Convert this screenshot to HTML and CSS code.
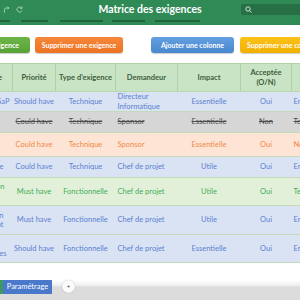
FILE: index.html
```html
<!DOCTYPE html>
<html lang="fr">
<head>
  <meta charset="UTF-8" />
  <title>Matrice des exigences</title>
  <link rel="stylesheet" href="styles.css">
</head>
<body>
  <div class="topbar">
    <div class="quick">
      <svg width="7" height="7" viewBox="0 0 7 7"><path d="M1.5 6.5V3.5Q1.5 2 3 2H6M4.5 0.5L6 2L4.5 3.5" fill="none" stroke="#9fd0b0" stroke-width="1"/></svg>
      <svg width="7" height="7" viewBox="0 0 7 7"><path d="M5.8 2.2A2.6 2.6 0 1 0 6 4.5M6 0.6V2.4H4.2" fill="none" stroke="#9fd0b0" stroke-width="1"/></svg>
    </div>
    <h1 class="title">Matrice des exigences</h1>
    <div class="search">
      <svg width="7" height="7" viewBox="0 0 7 7"><circle cx="3" cy="3" r="2.2" fill="none" stroke="#cfe6d6" stroke-width="1"/><path d="M4.6 4.6L6.5 6.5" stroke="#cfe6d6" stroke-width="1"/></svg>
    </div>
    <div class="rule">
      <span class="dash d1"></span>
      <span class="dash d2"></span>
      <span class="dash d3"></span>
      <span class="dash d4"></span>
      <span class="dash d5"></span>
    </div>
  </div>

  <div class="actions">
    <button class="btn green">Ajouter une exigence</button>
    <button class="btn orange">Supprimer une exigence</button>
    <button class="btn blue">Ajouter une colonne</button>
    <button class="btn yellow">Supprimer une colonne</button>
  </div>

  <div class="sheet">
    <table class="matrix">
      <colgroup>
        <col class="c-name"><col class="c-prio"><col class="c-type"><col class="c-dem"><col class="c-imp"><col class="c-acc"><col class="c-last">
      </colgroup>
      <thead>
        <tr>
          <th class="first end-2">Exigence</th>
          <th>Priorité</th>
          <th>Type d'exigence</th>
          <th>Demandeur</th>
          <th>Impact</th>
          <th>Acceptée<br>(O/N)</th>
          <th>Commentaire</th>
        </tr>
      </thead>
      <tbody>
        <tr class="blue h20">
          <td class="first end-10">Connecteur SaP</td>
          <td>Should have</td>
          <td>Technique</td>
          <td class="left">Directeur<br>Informatique</td>
          <td>Essentielle</td>
          <td>Oui</td>
          <td class="left">Entreprise</td>
        </tr>
        <tr class="gray h21">
          <td class="first"><span class="sub">Archivage</span></td>
          <td>Could have</td>
          <td>Technique</td>
          <td class="left">Sponsor</td>
          <td>Essentielle</td>
          <td>Non</td>
          <td class="left">Technique</td>
        </tr>
        <tr class="peach h24">
          <td class="first"><span class="sub">Export</span></td>
          <td>Could have</td>
          <td>Technique</td>
          <td class="left">Sponsor</td>
          <td>Essentielle</td>
          <td>Oui</td>
          <td class="left">Non</td>
        </tr>
        <tr class="blue h21">
          <td class="first end-3">Sauvegarde</td>
          <td>Could have</td>
          <td>Technique</td>
          <td class="left">Chef de projet</td>
          <td>Utile</td>
          <td>Oui</td>
          <td class="left">Entreprise</td>
        </tr>
        <tr class="green h28">
          <td class="first end-4">Authentification<span class="sub">unique</span></td>
          <td>Must have</td>
          <td>Fonctionnelle</td>
          <td class="left">Chef de projet</td>
          <td>Utile</td>
          <td>Oui</td>
          <td class="left">Technique</td>
        </tr>
        <tr class="blue h29">
          <td class="first end-3">Accès par session<br>Suivi par agent</td>
          <td>Must have</td>
          <td>Fonctionnelle</td>
          <td class="left">Chef de projet</td>
          <td>Utile</td>
          <td>Oui</td>
          <td class="left">Entreprise</td>
        </tr>
        <tr class="blue h28">
          <td class="first end-6"><span class="sub">Tableaux</span>de bord des ventes</td>
          <td>Should have</td>
          <td>Fonctionnelle</td>
          <td class="left">Chef de projet</td>
          <td>Essentielle</td>
          <td>Oui</td>
          <td class="left">Entreprise</td>
        </tr>
      </tbody>
    </table>
  </div>

  <div class="spacer"></div>

  <div class="sheetbar">
    <span class="tab tab-data"></span>
    <span class="tab tab-param">Paramétrage</span>
    <span class="add-sheet">+</span>
  </div>
</body>
</html>
```

FILE: styles.css
```css
body { margin: 0; width: 300px; height: 300px; overflow: hidden; display: flex; flex-direction: column; font-family: Lato, "Liberation Sans", sans-serif; background: #fff; }

/* barre du haut */
.topbar { height: 25px; background: #2f8a56; display: grid; grid-template-columns: 1fr auto 1fr; grid-template-rows: 19px 6px; flex-shrink: 0; }
.quick { display: flex; align-items: center; gap: 6px; padding-left: 3px; }
.title { margin: 0; font-size: 10.5px; font-weight: 700; color: #fff; line-height: 19px; }
.search { justify-self: end; align-self: center; width: 55px; height: 11px; background: #276f45; border-radius: 2px 0 0 2px; display: flex; align-items: center; padding-left: 4px; }
.rule { grid-column: 1 / -1; display: flex; padding-top: 1px; }
.dash { height: 2px; background: #21653f; }
.d1 { width: 10px; }
.d2 { width: 27px; margin-left: 11px; }
.d3 { width: 43px; margin-left: 12px; }
.d4 { width: 33px; margin-left: 9px; }
.d5 { width: 45px; margin-left: 10px; }

/* boutons */
.actions { display: flex; gap: 5px; margin: 12px 0 10px -58px; height: 16px; flex-shrink: 0; }
.btn { height: 16px; border: 0; border-radius: 3px; padding: 0; font-family: inherit; font-size: 7px; font-weight: 700; color: #fff; white-space: nowrap; box-shadow: 0 1px 1px rgba(0,0,0,.2); flex-shrink: 0; }
.btn.green { width: 88px; background: linear-gradient(#6db548, #58a236); }
.btn.orange { width: 88px; background: linear-gradient(#f6873a, #ec7323); }
.btn.blue { width: 83px; margin-left: 23px; background: linear-gradient(#62a0e0, #4a88cf); }
.btn.yellow { width: 88px; margin-left: 1px; background: linear-gradient(#fbc21a, #f1b000); text-align: left; padding-left: 7px; }

/* tableau */
.sheet { overflow: hidden; flex-shrink: 0; }
.matrix { margin-left: -68px; width: 479px; table-layout: fixed; border-collapse: collapse; font-size: 7.5px; }
.c-name { width: 80px; }
.c-prio { width: 43px; }
.c-type { width: 60px; }
.c-dem { width: 62px; }
.c-imp { width: 63px; }
.c-acc { width: 51px; }
.c-last { width: 120px; }
.matrix th { height: 27px; background: #c9e4c4; color: #3c5c3b; font-weight: 700; line-height: 10px; border: 1px solid #afd3a5; border-bottom-color: #b8d9ae; padding: 0 1px; white-space: nowrap; overflow: hidden; }
.matrix td { text-align: center; line-height: 9.5px; padding: 0 1px; border-bottom: 1px solid #c3dbbb; white-space: nowrap; overflow: hidden; }
.matrix td.left { text-align: left; padding-left: 2px; }
.matrix .first { text-align: right; padding-right: 1px; }
.matrix .end-2 { padding-right: 10px; }
.matrix .end-3 { padding-right: 9px; }
.matrix .end-4 { padding-right: 8px; }
.matrix .end-6 { padding-right: 6px; }
.matrix .end-10 { padding-right: 3px; }
.sub { display: block; text-align: left; }

.h20 td { height: 19px; }
.h21 td { height: 20px; }
.h24 td { height: 23px; }
.h28 td { height: 27px; }
.h29 td { height: 28px; }

tr.blue { background: #dae3f3; color: #5a80d2; }
tr.gray { background: #d6d6d6; color: #4d4d4d; text-decoration: line-through; }
tr.peach { background: #fde4d4; color: #f08948; }
tr.green { background: #e2f0da; color: #3fae57; }

/* onglets */
.spacer { flex: 1; }
.sheetbar { height: 20px; flex-shrink: 0; display: flex; align-items: flex-start; background: linear-gradient(#fff 0, #f1f1f1 5px, #dcdcdc 7px, #dcdcdc); }
.tab { height: 14px; font-size: 7.5px; line-height: 14px; color: #fff; }
.tab-data { width: 3px; background: #3c9a5f; }
.tab-param { width: 49px; background: #4a78cb; text-align: center; }
.add-sheet { width: 13px; height: 13px; margin-left: 10px; border-radius: 50%; background: #fbfbfb; box-shadow: 0 0 1px rgba(0,0,0,.35); font-size: 6px; line-height: 13px; text-align: center; color: #444; }
```
